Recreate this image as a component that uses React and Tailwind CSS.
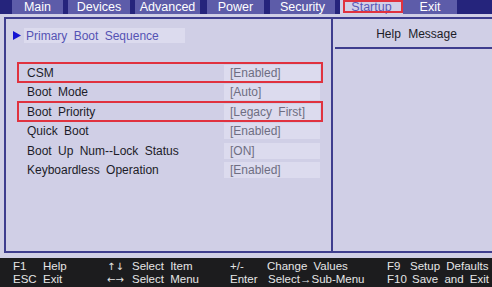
const tabs = [
  { name: "Main", w: "w-[51px]", ml: "ml-[12px]" },
  { name: "Devices", w: "w-[62px]", ml: "ml-[5px]" },
  { name: "Advanced", w: "w-[65px]", ml: "ml-[5px]" },
  { name: "Power", w: "w-[57px]", ml: "ml-[7px]" },
  { name: "Security", w: "w-[65px]", ml: "ml-[6px]" },
  { name: "Startup", w: "w-[63px]", ml: "ml-[5px]", active: true },
  { name: "Exit", w: "w-[54px]", ml: "ml-0" },
]

const rows = [
  { label: "CSM", value: "[Enabled]", marked: true },
  { label: "Boot Mode", value: "[Auto]" },
  { label: "Boot Priority", value: "[Legacy First]", marked: true },
  { label: "Quick Boot", value: "[Enabled]" },
  { label: "Boot Up Num--Lock Status", value: "[ON]" },
  { label: "Keyboardless Operation", value: "[Enabled]" },
]

function Tab({ tab }) {
  if (tab.active) {
    return (
      <div className={`${tab.w} ${tab.ml} h-full bg-[#d2d0e8] flex items-end justify-center relative`}>
        <span className="text-[12.5px] leading-[14px] text-[#5a58b8]">{tab.name}</span>
        <div className="absolute left-[3px] right-0 top-0 bottom-[1px] border-2 border-[#e0323f]" />
      </div>
    )
  }
  return (
    <div className={`${tab.w} ${tab.ml} h-full bg-[#5d5ca9] flex items-end justify-center`}>
      <span className="text-[12.5px] leading-[14px] text-white">{tab.name}</span>
    </div>
  )
}

function Row({ row }) {
  return (
    <div className="relative h-[19.5px] flex items-center">
      <span className="ml-[21px] w-[192px] text-[12px] text-[#1c1c28] [word-spacing:3px]">{row.label}</span>
      <div className="ml-[5px] w-[96px] h-[16px] bg-[#dcdbee] flex items-center">
        <span className="ml-[6px] text-[12px] text-[#6e6e82] [word-spacing:3px]">{row.value}</span>
      </div>
      {row.marked && (
        <div className="absolute left-[11px] w-[306px] top-[-1px] bottom-[0px] border-2 border-[#e0323f]" />
      )}
    </div>
  )
}

function Key({ k, label, kw, small }) {
  return (
    <div className="flex whitespace-nowrap items-baseline">
      <span
        className={`${kw} shrink-0 ${
          small ? "font-['DejaVu_Sans',sans-serif] text-[10px] [word-spacing:0px]" : ""
        }`}
      >
        {k}
      </span>
      <span>{label}</span>
    </div>
  )
}

export default function App() {
  return (
    <div className="w-[492px] h-[287px] bg-[#d0cfe6] flex flex-col overflow-hidden font-['Liberation_Sans',Arial,sans-serif]">
      {/* tabs */}
      <div className="h-[14px] bg-[#25247c] flex shrink-0 overflow-hidden">
        {tabs.map((t) => (
          <Tab key={t.name} tab={t} />
        ))}
      </div>

      {/* main panel */}
      <div className="mt-[3px] ml-[4px] h-[236px] border-t-2 border-l-2 border-b-2 border-[#3e3d8e] flex shrink-0">
        <div className="w-[327px] border-r-2 border-[#3e3d8e] flex flex-col">
          <div className="mt-[9px] h-[15px] flex items-center">
            <svg width="8" height="9" viewBox="0 0 8 9" className="ml-[7px]">
              <polygon points="0,0 8,4.5 0,9" fill="#1414d2" />
            </svg>
            <div className="ml-[3px] w-[161px] h-[15px] bg-[#dcdbee] flex items-center">
              <span className="ml-[2px] text-[12px] text-[#5553b4] [word-spacing:3px]">Primary Boot Sequence</span>
            </div>
          </div>
          <div className="mt-[20px] flex flex-col">
            {rows.map((r) => (
              <Row key={r.label} row={r} />
            ))}
          </div>
        </div>
        <div className="flex-1 flex flex-col">
          <div className="h-[28px] flex items-center justify-center pl-[8px] pt-[2px]">
            <span className="text-[12px] text-[#1c1c28] [word-spacing:4px]">Help Message</span>
          </div>
          <div className="ml-[2px] h-[2px] bg-[#3e3d8e]" />
        </div>
      </div>

      {/* footer */}
      <div className="mt-[5px] flex-1 bg-[#1c1c1e] text-[#e6e6e6] text-[11.5px] leading-[13px] pt-[2px] flex [word-spacing:3px]">
        <div className="ml-[13px] w-[94px] flex flex-col">
          <Key k="F1" label="Help" kw="w-[30px]" />
          <Key k="ESC" label="Exit" kw="w-[30px]" />
        </div>
        <div className="w-[123px] flex flex-col">
          <Key k="↑↓" label="Select Item" kw="w-[25px]" small />
          <Key k="←→" label="Select Menu" kw="w-[25px]" small />
        </div>
        <div className="w-[157px] flex flex-col">
          <Key k="+/-" label="Change Values" kw="w-[37px]" />
          <div className="flex whitespace-nowrap">
            <span className="w-[38px] shrink-0">Enter</span>
            <span className="[word-spacing:0px]">Select→Sub-Menu</span>
          </div>
        </div>
        <div className="flex flex-col">
          <Key k="F9" label="Setup Defaults" kw="w-[23px]" />
          <Key k="F10" label="Save and Exit" kw="w-[25px]" />
        </div>
      </div>
    </div>
  )
}
